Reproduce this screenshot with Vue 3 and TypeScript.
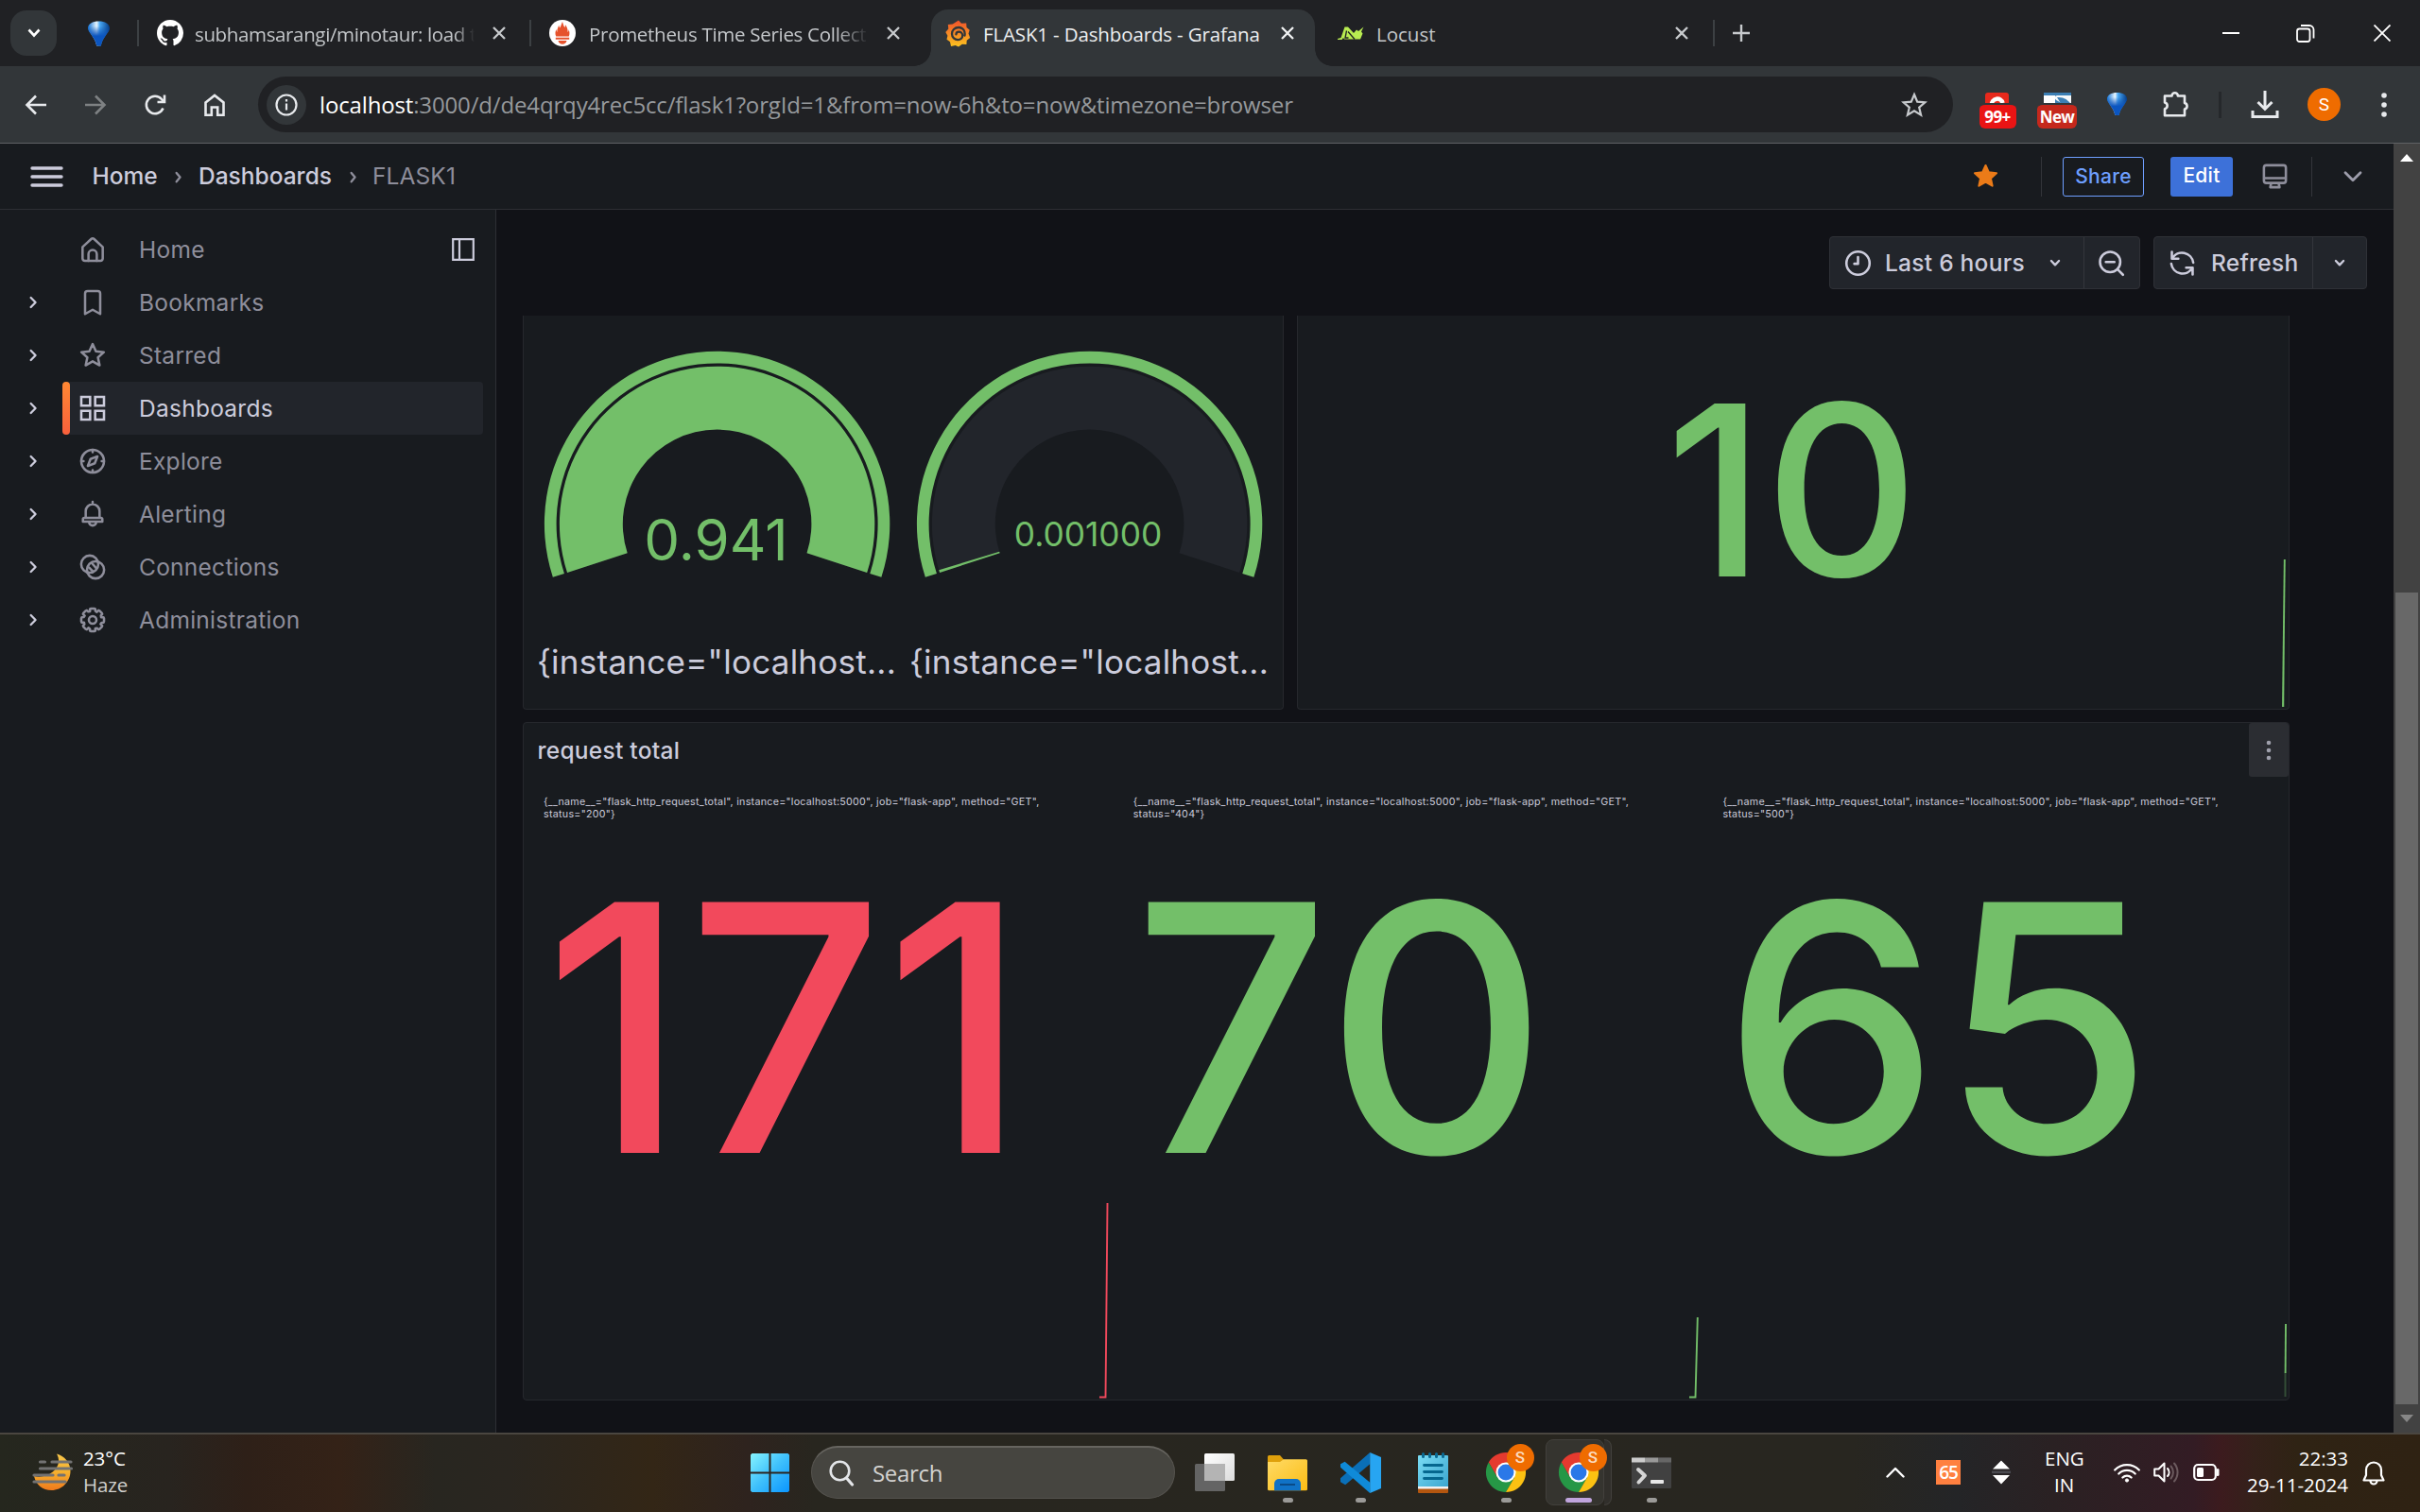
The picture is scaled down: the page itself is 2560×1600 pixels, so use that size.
<script setup lang="ts">
interface NavItem {
  label: string
  paths: string[]
  expandable: boolean
  active?: boolean
}

/** Outline of a cog with eight rounded teeth, centred in a 24-unit box. */
function cogPath(): string {
  const points: string[] = []
  for (let i = 0; i < 8; i++) {
    const base = (i * Math.PI) / 4 - Math.PI / 2
    const steps: [number, number][] = [
      [-0.24, 8.9],
      [-0.13, 9.1],
      [0.13, 9.1],
      [0.24, 8.9],
      [0.3, 7.4],
      [0.485, 7.1],
    ]
    for (const [offset, radius] of steps) {
      const a = base + offset
      points.push(`${(12 + radius * Math.cos(a)).toFixed(2)} ${(12 + radius * Math.sin(a)).toFixed(2)}`)
    }
  }
  return `M${points.join('L')}Z`
}

const starPath =
  'M12 3.1l2.6 5.7 6.3.7-4.7 4.2 1.3 6.2L12 16.8l-5.5 3.1 1.3-6.2-4.7-4.2 6.3-.7z'

const balloonPath = 'M1 8C1 3 6 .5 12.500.5S24 3 24 8C24 12 16 18 14.800 26.500h-4.600C9 18 1 12 1 8z'

const navItems: NavItem[] = [
  {
    label: 'Home',
    expandable: false,
    paths: ['M4 10l7-6.4a1.5 1.5 0 0 1 2 0l7 6.4v9.2a1.8 1.8 0 0 1-1.8 1.8H5.800A1.800 1.800 0 0 1 4 19.200z', 'M8.700 21v-5.300a3.300 3.300 0 0 1 6.600 0V21'],
  },
  { label: 'Bookmarks', expandable: true, paths: ['M6 21.200V5a2 2 0 0 1 2-2h8a2 2 0 0 1 2 2v16.200l-6-3.400z'] },
  { label: 'Starred', expandable: true, paths: [starPath] },
  {
    label: 'Dashboards',
    expandable: true,
    active: true,
    paths: ['M3 3h7v7H3zM14 3h7v7h-7zM3 14h7v7H3zM14 14h7v7h-7z'],
  },
  {
    label: 'Explore',
    expandable: true,
    paths: [
      'M21 12a9 9 0 1 1-18 0 9 9 0 0 1 18 0z',
      'M15.800 8.200l-2.100 5.500-5.500 2.100 2.100-5.500zM12 3v1.800M12 19.200V21M3 12h1.800M19.200 12H21',
    ],
  },
  {
    label: 'Alerting',
    expandable: true,
    paths: ['M12 2.200v2M6.500 15V9.700a5.500 5.500 0 0 1 11 0V15M5.500 15h13a1.200 1.200 0 0 1 1.200 1.200V18H4.300v-1.800A1.200 1.200 0 0 1 5.500 15z', 'M9.200 18.300a2.800 2.800 0 0 0 5.600 0'],
  },
  {
    label: 'Connections',
    expandable: true,
    paths: [
      'M16.500 9.700a6.800 6.800 0 1 1-13.600 0 6.800 6.800 0 0 1 13.600 0z',
      'M21.100 14.300a6.800 6.800 0 1 1-13.600 0 6.800 6.800 0 0 1 13.600 0z',
      'M9.200 12.500l3.200 3.200M11.600 9.200l3.200 3.600',
    ],
  },
  {
    label: 'Administration',
    expandable: true,
    paths: [cogPath(), 'M15 12a3 3 0 1 1-6 0 3 3 0 0 1 6 0z'],
  },
]

const CX = 196.6
const CY = 220.4
const START = -198
const SWEEP = 216

function polar(r: number, deg: number): string {
  const a = (deg * Math.PI) / 180
  return `${(CX + r * Math.cos(a)).toFixed(2)} ${(CY + r * Math.sin(a)).toFixed(2)}`
}

/** Ring segment between two radii, from fraction 0 to `fraction` of the gauge sweep. */
function band(inner: number, outer: number, fraction: number): string {
  const end = START + SWEEP * fraction
  const large = SWEEP * fraction > 180 ? 1 : 0
  return `M${polar(outer, START)}A${outer} ${outer} 0 ${large} 1 ${polar(outer, end)}L${polar(inner, end)}A${inner} ${inner} 0 ${large} 0 ${polar(inner, START)}Z`
}

const gauges = [
  { text: '0.941', size: 60, baseline: 259, fill: 1, x: 195.5 },
  { text: '0.001000', size: 35.3, baseline: 243.5, fill: 0.0045, x: 195 },
]

const stats = [
  { code: '200', value: '171', color: '#f2495c', spark: 'M588 208.500H594.500L596.500 3' },
  { code: '404', value: '70', color: '#73bf69', spark: 'M588 208.500H594.500L596.800 124' },
  { code: '500', value: '65', color: '#73bf69', spark: 'M595.600 183L596 131' },
]
</script>

<template>
  <div class="screen">
    <!-- Tab strip -->
    <div class="tabs">
      <div class="tab-search">
        <svg width="18" height="12" viewBox="0 0 18 12"><path d="M3.500 2.500L9 8.500l5.500-6" stroke="#fff" stroke-width="2.600" fill="none" /></svg>
      </div>
      <svg class="balloon" width="25" height="27" viewBox="0 0 25 27">
        <defs>
          <linearGradient id="bl" x1="0" y1="0" x2="1" y2="0">
            <stop offset="0" stop-color="#1173d8" /><stop offset=".4" stop-color="#eaf7ff" /><stop offset=".55" stop-color="#49a8f5" /><stop offset="1" stop-color="#033b86" />
          </linearGradient>
          <linearGradient id="bv" x1="0" y1="0" x2="0" y2="1">
            <stop offset=".2" stop-color="#0a4fae" stop-opacity="0" /><stop offset=".6" stop-color="#0b55c0" />
          </linearGradient>
        </defs>
        <path :d="balloonPath" fill="url(#bl)" />
        <path :d="balloonPath" fill="url(#bv)" />
      </svg>
      <i class="sep s1"></i>
      <svg class="gh" width="28" height="28" viewBox="0 0 16 16"><path fill="#fff" d="M8 0C3.580 0 0 3.580 0 8c0 3.540 2.290 6.530 5.470 7.590.4.070.55-.17.55-.38 0-.19-.01-.82-.01-1.490-2.010.37-2.530-.49-2.690-.94-.09-.23-.48-.94-.82-1.130-.28-.15-.68-.52-.01-.53.63-.01 1.080.58 1.230.82.72 1.210 1.870.87 2.330.66.070-.52.28-.87.51-1.070-1.780-.2-3.640-.89-3.640-3.950 0-.87.31-1.590.82-2.150-.08-.2-.36-1.020.08-2.120 0 0 .67-.21 2.200.82.64-.18 1.320-.27 2-.27s1.360.09 2 .27c1.530-1.040 2.200-.82 2.200-.82.44 1.100.16 1.920.08 2.120.51.56.82 1.270.82 2.150 0 3.070-1.870 3.750-3.650 3.950.29.25.54.73.54 1.480 0 1.070-.01 1.930-.01 2.200 0 .21.15.46.55.38A8.010 8.010 0 0016 8c0-4.420-3.580-8-8-8z" /></svg>
      <span class="tab-title t1">subhamsarangi/minotaur: load t</span>
      <svg class="x x1" viewBox="0 0 14 14"><path d="M1 1l12 12M13 1L1 13" /></svg>
      <i class="sep s2"></i>
      <svg class="prom" width="28" height="28" viewBox="0 0 28 28">
        <circle cx="14" cy="14" r="14" fill="#fff" />
        <path fill="#e6522c" d="M14 2c1 3 1 4 2.500 6 .6-1 .5-2 .3-3 2 2 3 5 2.800 8 1-1 1-2 1-3 1 2.500 1.200 5 .2 7.500H7.200C6 15 6.400 12 7.500 10c0 1 .2 2 1 3C8 10 9.500 7.500 10.500 5.500c0 1.300 0 2 .7 3C12.500 6.500 13 4 14 2zM6.800 18.800h14.400v2H6.800zM9.500 22h9c-.5 2.500-2.300 3.800-4.500 3.800S10 24.500 9.500 22z" />
      </svg>
      <span class="tab-title t2">Prometheus Time Series Collect</span>
      <svg class="x x2" viewBox="0 0 14 14"><path d="M1 1l12 12M13 1L1 13" /></svg>
      <div class="tab-active">
        <svg class="graf" width="27" height="29" viewBox="0 0 27 29">
          <defs><linearGradient id="gg" x1="0" y1="0" x2="0" y2="1"><stop offset="0" stop-color="#f0512b" /><stop offset="1" stop-color="#fcc41f" /></linearGradient></defs>
          <path fill="url(#gg)" d="M14 .5l3 3.300 5.200-.3.300 4.500 3.200 2.800-1.200 3.700 1.700 4.500-3.500 2.700-.3 4.300-4.600-.3L14 28.500l-3.300-1.600-4.700 1-1-4.600-3.500-2.600.9-4L.3 13l3-3.500-.5-4.500 5-.6z" />
          <path d="M20.500 16.500c.8-5-2-8.500-6.300-8.500-4.400 0-7.200 3.200-7.200 6.800 0 3.800 3 6.400 6.300 6.400 3 0 4.900-2.200 4.900-4.600s-1.700-4-3.800-4c-1.900 0-3 1.300-3 2.800" fill="none" stroke="#323639" stroke-width="2.300" stroke-linecap="round" />
        </svg>
        <span class="tab-title t3">FLASK1 - Dashboards - Grafana</span>
        <svg class="x x3" viewBox="0 0 14 14"><path d="M1 1l12 12M13 1L1 13" /></svg>
      </div>
      <svg class="locust" width="28" height="15" viewBox="0 0 28 15">
        <path fill="#b8ec51" d="M0 13L3.500 12 7.500.5h3.500l6 6.500 3-3.500 2 1.500L27.500.5l-2.500 5 1.500 2-2.500 6H7l-1-1.500-1.500 2H0z" />
        <path d="M9.500 4.500l-1.500 7.500h3.500M11 5.500l7 8" stroke="#202124" stroke-width="1.300" fill="none" />
      </svg>
      <span class="tab-title t4">Locust</span>
      <svg class="x x4" viewBox="0 0 14 14"><path d="M1 1l12 12M13 1L1 13" /></svg>
      <i class="sep s3"></i>
      <svg class="plus" width="18" height="18" viewBox="0 0 18 18"><path d="M9 0v18M0 9h18" stroke="#c7cacd" stroke-width="2.400" /></svg>
      <div class="grow"></div>
      <svg width="18" height="18" viewBox="0 0 18 18"><path d="M0 9h18" stroke="#fff" stroke-width="2" /></svg>
      <svg class="win2" width="20" height="19" viewBox="0 0 20 19" fill="none" stroke="#fff" stroke-width="1.800"><rect x="1" y="4.500" width="13.500" height="13.500" rx="2.500" /><path d="M5 1h9a4.500 4.500 0 0 1 4.500 4.500V14.500" /></svg>
      <svg class="win3" width="18" height="18" viewBox="0 0 18 18"><path d="M.5.5l17 17M17.500.5l-17 17" stroke="#fff" stroke-width="1.800" /></svg>
    </div>

    <!-- Address bar -->
    <div class="toolbar">
      <div class="tb-nav">
        <svg width="28" height="28" viewBox="0 0 28 28"><path d="M25 14H5M14 4.500L4.500 14l9.500 9.500" /></svg>
        <svg width="28" height="28" viewBox="0 0 28 28" class="dim"><path d="M3 14h20M14 4.500l9.500 9.500-9.500 9.500" /></svg>
        <svg width="28" height="28" viewBox="0 0 28 28"><path d="M22.500 17.500A9.200 9.200 0 1 1 21 8l2.500 3M24 3.500V11h-7.500" /></svg>
        <svg width="28" height="28" viewBox="0 0 28 28"><path d="M4.500 11.500L14 4l9.500 7.500v13.200h-6.300v-8.200h-6.400v8.200H4.500z" /></svg>
      </div>
      <div class="omnibox">
        <span class="info">
          <svg width="24" height="24" viewBox="0 0 24 24" fill="none" stroke="#e8eaed" stroke-width="2.200"><circle cx="12" cy="12" r="10.500" /><path d="M12 10.500v7M12 6v2.500" /></svg>
        </span>
        <span class="url"><b>localhost</b>:3000/d/de4qrqy4rec5cc/flask1?orgId=1&amp;from=now-6h&amp;to=now&amp;timezone=browser</span>
        <svg class="fav" width="28" height="28" viewBox="0 0 28 28"><path d="M14 3l3.200 7.600 8.200.7-6.200 5.400 1.900 8L14 20.400l-7.100 4.300 1.900-8-6.200-5.400 8.200-.7z" fill="none" stroke="#c7cacd" stroke-width="2.200" /></svg>
      </div>
      <div class="exts">
        <div class="ext">
          <svg width="26" height="26" viewBox="0 0 26 26"><rect x="0" y="0" width="25" height="26" rx="3" fill="#e8291c" /><path d="M6.500 14C6.500 5 17 4.500 18.500 11" fill="none" stroke="#fff" stroke-width="4.500" /></svg>
          <span class="badge b1">99+</span>
        </div>
        <div class="ext">
          <svg width="29" height="26" viewBox="0 0 29 26"><rect width="29" height="26" fill="#f5f8fa" /><path d="M0 0h29v3H14c-4 1-3 4 1 6l8 4H0z" fill="#3c7fb4" /><path d="M0 3l12 0v10H0z" fill="#fff" /><path d="M14 5q10-1 15 8H19z" fill="#3c7fb4" /></svg>
          <span class="badge b2">New</span>
        </div>
        <div class="ext">
          <svg class="ball2" width="23" height="26" viewBox="0 0 25 27"><path :d="balloonPath" fill="url(#bl)" /><path :d="balloonPath" fill="url(#bv)" /></svg>
        </div>
        <div class="ext">
          <svg class="puzzle" width="30" height="30" viewBox="0 0 30 30"><path d="M3 6.500h7.500a3.200 3.200 0 0 1 6.400 0H24V14a3.400 3.400 0 0 1 0 6.600v6.600H3v-7a3.500 3.500 0 0 0 0-6.800z" fill="none" stroke="#e8eaed" stroke-width="2.600" stroke-linejoin="round" /></svg>
        </div>
        <i class="ext-sep"></i>
        <div class="ext">
          <svg width="30" height="30" viewBox="0 0 30 30" fill="none" stroke="#e8eaed" stroke-width="3"><path d="M15 0v19M7.500 12l7.500 7.500 7.500-7.500" /><path d="M2 21v6.500h26V21" /></svg>
        </div>
        <div class="ext"><span class="avatar">S</span></div>
        <div class="ext">
          <svg width="8" height="28" viewBox="0 0 8 28" fill="#e8eaed"><circle cx="4" cy="4" r="2.800" /><circle cx="4" cy="14" r="2.800" /><circle cx="4" cy="24" r="2.800" /></svg>
        </div>
      </div>
    </div>

    <!-- Page -->
    <div class="page">
      <div class="app">
        <header class="topbar">
          <svg class="burger" width="35" height="22" viewBox="0 0 35 22"><path d="M2 2h31M2 11h31M2 20h31" stroke="#ccccdc" stroke-width="3.400" stroke-linecap="round" /></svg>
          <span class="crumb c1">Home</span>
          <svg class="cr" width="28" height="28" viewBox="0 0 24 24"><path d="M10 8.500l3.300 4-3.300 4" /></svg>
          <span class="crumb c2">Dashboards</span>
          <svg class="cr" width="28" height="28" viewBox="0 0 24 24"><path d="M10 8.500l3.300 4-3.300 4" /></svg>
          <span class="crumb c3">FLASK1</span>
          <div class="grow"></div>
          <svg class="ostar" width="31" height="31" viewBox="0 0 24 24"><path :d="starPath" fill="#eb7b18" stroke="#eb7b18" stroke-width="1.600" stroke-linejoin="round" /></svg>
          <i class="vsep v1"></i>
          <span class="btn share">Share</span>
          <span class="btn edit">Edit</span>
          <svg class="monitor" width="31" height="31" viewBox="0 0 24 24" fill="none" stroke="#8e8e9b" stroke-width="2" stroke-linejoin="round"><rect x="3" y="3" width="18" height="14.500" rx="2" /><path d="M3 13.500h18M9 17.500l-.8 3.500h7.600l-.8-3.500" /></svg>
          <i class="vsep v2"></i>
          <svg class="topchev" width="28" height="28" viewBox="0 0 28 28"><path d="M6 9.800l8 8 8-8" fill="none" stroke="#9d9dab" stroke-width="2.800" stroke-linecap="round" stroke-linejoin="round" /></svg>
        </header>

        <div class="body">
          <nav class="side">
            <div v-for="item in navItems" :key="item.label" class="nav-row">
              <svg class="nav-chev" width="28" height="28" viewBox="0 0 24 24">
                <path v-if="item.expandable" d="M10 7.700l4.200 4.300-4.200 4.300" />
              </svg>
              <div class="nav-item" :class="{ on: item.active }">
                <svg class="nav-icon" width="32" height="32" viewBox="0 0 24 24">
                  <path v-for="d in item.paths" :key="d" :d="d" />
                </svg>
                <span>{{ item.label }}</span>
                <svg v-if="!item.expandable" class="dock" width="24" height="24" viewBox="0 0 24 24"><path d="M1.200 1.200h21.600v21.600H1.200zM8 1.200v21.600" fill="none" stroke="#ccccdc" stroke-width="2.200" /></svg>
              </div>
            </div>
          </nav>

          <main class="main">
            <div class="controls">
              <div class="group">
                <span class="cell range">
                  <svg width="31" height="31" viewBox="0 0 24 24"><circle cx="12" cy="12" r="9.500" /><path d="M12 7v5.500H9" /></svg>
                  <span class="last">Last 6 hours</span>
                  <svg class="small-chev" width="28" height="28" viewBox="0 0 24 24"><path d="M8.500 10.300l3.500 3.700 3.500-3.700" /></svg>
                </span>
                <span class="cell zoom">
                  <svg width="31" height="31" viewBox="0 0 24 24"><circle cx="11" cy="11" r="8.300" /><path d="M7.500 11h7M17 17l4.500 4.500" /></svg>
                </span>
              </div>
              <div class="group">
                <span class="cell refresh">
                  <svg width="31" height="31" viewBox="0 0 24 24"><path d="M3.500 2.800v5.500h5.300M3.800 8A9.300 9.300 0 0 1 21 11.500M20.500 21.200v-5.500h-5.300M20.200 16A9.300 9.300 0 0 1 3 12.500" /></svg>
                  <span class="rf">Refresh</span>
                </span>
                <span class="cell interval">
                  <svg class="small-chev" width="28" height="28" viewBox="0 0 24 24"><path d="M8.500 10.300l3.500 3.700 3.500-3.700" /></svg>
                </span>
              </div>
            </div>

            <div class="panels">
              <section class="panel cut gauges">
                <div v-for="g in gauges" :key="g.text" class="gauge">
                  <svg width="394" height="346" viewBox="0 0 394 346">
                    <path :d="band(170, 182.700, 1)" fill="#73bf69" />
                    <path :d="band(99.800, 166.700, 1)" fill="#22252b" />
                    <path :d="band(99.800, 166.700, g.fill)" fill="#73bf69" />
                    <text :x="g.x" :y="g.baseline" :font-size="g.size" text-anchor="middle" fill="#73bf69">{{ g.text }}</text>
                  </svg>
                  <div class="gauge-title">{instance="localhost...</div>
                </div>
              </section>

              <section class="panel cut single">
                <div class="ten">10</div>
                <svg class="ten-spark" width="8" height="160" viewBox="0 0 8 160"><path d="M4.500 2l-1.800 156h2.300z" fill="#73bf69" fill-opacity=".25" /><path d="M4.800 2l-1.800 156" stroke="#73bf69" stroke-width="1.900" fill="none" /></svg>
              </section>

              <section class="panel totals">
                <div class="panel-head">
                  <span>request total</span>
                  <div class="menu">
                    <svg width="6" height="22" viewBox="0 0 6 22" fill="#9fa0ac"><circle cx="3" cy="3" r="2.300" /><circle cx="3" cy="11" r="2.300" /><circle cx="3" cy="19" r="2.300" /></svg>
                  </div>
                </div>
                <div class="stat-row">
                  <div v-for="s in stats" :key="s.code" class="stat">
                    <div class="stat-label">{__name__="flask_http_request_total", instance="localhost:5000", job="flask-app", method="GET",<br />status="{{ s.code }}"}</div>
                    <div class="stat-value" :style="{ color: s.color }">{{ s.value }}</div>
                    <svg class="spark" width="598" height="210" viewBox="0 0 598 210">
                      <path v-if="s.code === '500'" d="M595.500 183v25" :stroke="s.color" stroke-opacity=".3" stroke-width="2" />
                      <path :d="s.spark" :stroke="s.color" stroke-width="1.900" fill="none" />
                    </svg>
                  </div>
                </div>
              </section>
            </div>
          </main>
        </div>
      </div>

      <div class="scrollbar">
        <div class="arrow"><svg width="14" height="8" viewBox="0 0 14 8"><path d="M0 8l7-8 7 8z" fill="#fff" /></svg></div>
        <div class="thumb"></div>
        <div class="arrow"><svg width="14" height="8" viewBox="0 0 14 8"><path d="M0 0l7 8 7-8z" fill="#868686" /></svg></div>
      </div>
    </div>

    <!-- Taskbar -->
    <div class="taskbar">
      <svg class="weather" width="44" height="40" viewBox="0 0 44 40">
        <defs><linearGradient id="mg" x1="0" y1="0" x2="0" y2="1"><stop offset="0" stop-color="#f7c64a" /><stop offset=".5" stop-color="#f5b02e" /><stop offset="1" stop-color="#f07a1c" /></linearGradient></defs>
        <path d="M26 .5C34 2.500 40.500 9.500 40.500 18.500 40.500 30 31.500 39 20.500 39 11 39 4 33 2 24c12 3 25-5 26-15 .2-3-.5-6-2-8.500z" fill="url(#mg)" />
        <path d="M8.500 9h5M21 9h20M8.500 16h33M2 23h20M28 23h6M2 30h33" stroke="#727272" stroke-width="3.200" stroke-linecap="round" />
      </svg>
      <div class="temp"><span class="hi">23°C</span><span>Haze</span></div>
      <svg class="start" width="41" height="41" viewBox="0 0 41 41">
        <defs><linearGradient id="wg" gradientUnits="userSpaceOnUse" x1="0" y1="0" x2="41" y2="41"><stop offset="0" stop-color="#86f4ff" /><stop offset=".5" stop-color="#3fc0fb" /><stop offset="1" stop-color="#0a95ff" /></linearGradient></defs>
        <path d="M1.500 0H19.500V19.500H0V1.500zM21.500 0H39.500L41 1.500V19.500H21.500zM0 21.500H19.500V41H1.500L0 39.500zM21.500 21.500H41V39.500L39.500 41H21.500z" fill="url(#wg)" />
      </svg>
      <div class="search">
        <svg width="27" height="28" viewBox="0 0 27 28" fill="none" stroke="#e3e5e8" stroke-width="2.600" stroke-linecap="round"><circle cx="11.500" cy="11.500" r="9.800" /><path d="M18.500 19l6 7" stroke-width="3.200" /></svg>
        <span>Search</span>
      </div>
      <div class="apps">
        <div class="appcell">
          <svg width="42" height="42" viewBox="0 0 42 42"><defs><linearGradient id="tv" x1="0" y1="0" x2="1" y2="1"><stop offset="0" stop-color="#fff" /><stop offset="1" stop-color="#dcdcdc" /></linearGradient></defs><rect x="10" y="1" width="32" height="29" rx="1.500" fill="url(#tv)" /><rect x="0" y="12" width="32" height="29" rx="1.500" fill="#646464" /><rect x="10" y="12" width="22" height="18" fill="#b4b4b4" /></svg>
        </div>
        <div class="appcell">
          <svg width="42" height="42" viewBox="0 0 42 42"><defs><linearGradient id="fo" x1="0" y1="0" x2="1" y2="1"><stop offset="0" stop-color="#ffdb66" /><stop offset="1" stop-color="#fbbc14" /></linearGradient></defs><path d="M0 4.500A1.500 1.500 0 0 1 1.500 3H13l4 4.500V12H0z" fill="#dfa00b" /><path d="M0 10h13l4-2.800h23.500A1.500 1.500 0 0 1 42 8.700v30a1.500 1.500 0 0 1-1.500 1.500h-39A1.500 1.500 0 0 1 0 38.700z" fill="url(#fo)" /><path d="M7 40.200V33a5 5 0 0 1 5-5h18a5 5 0 0 1 5 5v7.200z" fill="#1072c6" /><path d="M13 34h16" stroke="#0a4a86" stroke-width="2" /></svg>
          <i class="dot"></i>
        </div>
        <div class="appcell">
          <svg width="43" height="43" viewBox="0 0 42 42"><path d="M30.500 0v12L5 33.500 0 30.500v-4z" fill="#0a6fb8" /><path d="M30.500 42V31L4.500 9.500 0 12v3.500z" fill="#0f8ad8" /><path d="M30.500 0L42 5v32l-11.500 5z" fill="#27a5f2" /></svg>
          <i class="dot"></i>
        </div>
        <div class="appcell">
          <svg width="32" height="43" viewBox="0 0 32 43"><defs><linearGradient id="np" x1="0" y1="0" x2="1" y2="1"><stop offset="0" stop-color="#7adcf4" /><stop offset="1" stop-color="#3ba6d0" /></linearGradient></defs><rect y="38" width="32" height="5" rx="1" fill="#b4560f" /><rect y="33" width="32" height="5.500" fill="#f1f1f1" /><path d="M0 4a1 1 0 0 1 1-1h30a1 1 0 0 1 1 1v32H0z" fill="url(#np)" /><path d="M5.500 1.500v3M12.500 1.500v3M19.500 1.500v3M26.500 1.500v3" stroke="#0a6a92" stroke-width="3" stroke-linecap="round" /><path d="M6.500 13.500h19M6.500 20.500h19M6.500 27.500h19" stroke="#05678f" stroke-width="2.800" stroke-linecap="round" /></svg>
        </div>
        <div v-for="n in 2" :key="n" class="appcell" :class="{ current: n === 2 }">
          <svg width="46" height="46" viewBox="0 0 48 48"><path d="M4.950 13A22 22 0 0 1 43.050 13H24L14.470 29.500z" fill="#e53a2f" /><path d="M4.950 13A22 22 0 0 0 24 46l9.530-16.500H14.470z" fill="#269746" /><path d="M43.050 13A22 22 0 0 1 24 46l9.530-16.500L24 13z" fill="#fcc112" /><circle cx="24" cy="24" r="11" fill="#fff" /><circle cx="24" cy="24" r="8.800" fill="#2a78e8" /></svg>
          <span class="who">S</span>
          <i class="dot" :class="{ wide: n === 2 }"></i>
        </div>
        <div class="appcell">
          <svg width="42" height="42" viewBox="0 0 42 42"><path d="M0 7a1.500 1.500 0 0 1 1.500-1.500h39A1.500 1.500 0 0 1 42 7v30a1 1 0 0 1-1 1H1a1 1 0 0 1-1-1z" fill="#414141" /><path d="M0 5.500h14V10.500H0z" fill="#ccc" /><path d="M14 5.500h14V10.500H14z" fill="#999" /><path d="M28 5.500h14V10.500H28z" fill="#666" /><path d="M7 18l7 6.500L7.500 31.500" fill="none" stroke="#d5d5d5" stroke-width="4" stroke-linecap="round" stroke-linejoin="round" /><rect x="20" y="29" width="14" height="4" rx="1" fill="#e8e8e8" /></svg>
          <i class="dot"></i>
        </div>
      </div>
      <div class="grow"></div>
      <svg class="up" width="20" height="12" viewBox="0 0 20 12"><path d="M1.500 10.500L10 2l8.500 8.500" fill="none" stroke="#fff" stroke-width="2.400" stroke-linecap="round" stroke-linejoin="round" /></svg>
      <span class="t65">65</span>
      <svg class="updown" width="20" height="26" viewBox="0 0 20 26"><path d="M1 9.500L10 .5l9 9zM1 16l9 9.500 9-9.500z" fill="#fff" /><path d="M0 12.800h20" stroke="#4a4a50" stroke-width="2.500" /></svg>
      <div class="lang"><span>ENG</span><span>IN</span></div>
      <svg class="wifi" width="28" height="22" viewBox="0 0 28 22" fill="none" stroke="#fff" stroke-width="2.200" stroke-linecap="round"><path d="M1.200 8.500a18 18 0 0 1 25.600 0M5.300 12.500a12.300 12.300 0 0 1 17.400 0M9.400 16.500a6.500 6.500 0 0 1 9.200 0" /><circle cx="14" cy="19.500" r="1.600" fill="#fff" stroke-width="1" /></svg>
      <svg class="spk" width="28" height="24" viewBox="0 0 28 24" fill="none" stroke="#fff" stroke-width="2" stroke-linecap="round" stroke-linejoin="round"><path d="M1.200 8.500h4.300l6-6v19l-6-6H1.200z" /><path d="M15 8a6 6 0 0 1 0 8" /><path d="M18.500 5.500a10 10 0 0 1 0 13M22 2.500a14.500 14.500 0 0 1 0 19" stroke="#6b5a5e" /></svg>
      <svg class="bat" width="28" height="20" viewBox="0 0 28 20"><rect x="1.200" y="2" width="22.600" height="16" rx="4" fill="none" stroke="#fff" stroke-width="2.200" /><rect x="4" y="5" width="7" height="10" rx="1.500" fill="#fff" /><path d="M26 7.500v5" stroke="#fff" stroke-width="3" stroke-linecap="round" /></svg>
      <div class="clock"><span>22:33</span><span>29-11-2024</span></div>
      <svg class="bell" width="24" height="27" viewBox="0 0 24 27" fill="none" stroke="#fff" stroke-width="2.200" stroke-linejoin="round"><path d="M4 10.500a8 8 0 0 1 16 0V16l2.500 5.500h-21L4 16z" /><path d="M8.500 22a3.500 3.500 0 0 0 7 0" /></svg>
    </div>
  </div>
</template>

<style>
body {
  margin: 0;
  background: #111217;
}
</style>

<style scoped>
.screen {
  width: 2560px;
  height: 1600px;
  overflow: hidden;
  display: flex;
  flex-direction: column;
  background: #111217;
  font-family: 'Open Sans', 'Noto Sans', sans-serif;
}
.screen svg {
  display: block;
  flex: none;
}
.grow {
  flex: 1;
}

/* Tab strip */
.tabs {
  height: 70px;
  flex: none;
  display: flex;
  align-items: center;
  background: #202124;
  padding-left: 11px;
  padding-right: 31px;
}
.tab-search {
  width: 49px;
  height: 48px;
  border-radius: 17px;
  background: #323639;
  display: flex;
  align-items: center;
  justify-content: center;
}
.balloon { margin-left: 32px; }
.sep {
  width: 2px;
  height: 28px;
  flex: none;
  background: #3c4043;
}
.s1 { margin-left: 28px; }
.gh { margin-left: 19px; }
.s2 { margin-left: 25px; }
.prom { margin-left: 19px; }
.s3 { margin-left: 26px; }
.plus { margin-left: 19px; }
.tab-title {
  flex: none;
  font-size: 20.5px;
  line-height: 28px;
  padding-top: 2px;
  color: #c3c6c9;
  white-space: nowrap;
}
.t1 {
  margin-left: 12px;
  width: 298px;
  letter-spacing: -0.36px;
  -webkit-mask-image: linear-gradient(90deg, #000 275px, transparent 296px);
  mask-image: linear-gradient(90deg, #000 275px, transparent 296px);
}
.t2 {
  margin-left: 14px;
  width: 296px;
  letter-spacing: -0.29px;
  -webkit-mask-image: linear-gradient(90deg, #000 262px, transparent 296px);
  mask-image: linear-gradient(90deg, #000 262px, transparent 296px);
}
.t3 {
  margin-left: 13px;
  width: 297px;
  color: #eceef0;
  letter-spacing: -0.14px;
}
.t4 {
  margin-left: 13px;
  width: 289px;
}
.x {
  width: 14px;
  height: 14px;
  fill: none;
  stroke: #c7cacd;
  stroke-width: 2.3;
}
.x1 { margin-left: 17px; }
.x2 { margin-left: 19px; }
.x3 { margin-left: 18px; stroke: #f1f3f4; }
.x4 { margin-left: 27px; }
.tab-active {
  position: relative;
  align-self: flex-end;
  margin-left: 33px;
  width: 406px;
  height: 60px;
  flex: none;
  box-sizing: border-box;
  padding-left: 15px;
  padding-bottom: 10px;
  display: flex;
  align-items: center;
  border-radius: 18px 18px 0 0;
  background: #323639;
}
.tab-active::before,
.tab-active::after {
  content: '';
  position: absolute;
  bottom: 0;
  width: 18px;
  height: 18px;
}
.tab-active::before {
  left: -18px;
  background: radial-gradient(circle at 0 0, transparent 17.5px, #323639 18px);
}
.tab-active::after {
  right: -18px;
  background: radial-gradient(circle at 100% 0, transparent 17.5px, #323639 18px);
}
.locust { margin-left: 24px; }
.win2 { margin-left: 60px; }
.win3 { margin-left: 62px; }

/* Address bar */
.toolbar {
  height: 82px;
  flex: none;
  box-sizing: border-box;
  display: flex;
  align-items: center;
  background: #323639;
  border-bottom: 1px solid #5f6164;
}
.tb-nav {
  display: flex;
  gap: 35px;
  margin-left: 24px;
  fill: none;
  stroke: #e8eaed;
  stroke-width: 2.6;
}
.tb-nav .dim { stroke: #7e8183; }
.omnibox {
  margin-left: 32px;
  width: 1793px;
  height: 59px;
  flex: none;
  box-sizing: border-box;
  padding: 0 27px 0 9px;
  border-radius: 30px;
  background: #202124;
  display: flex;
  align-items: center;
}
.info {
  width: 42px;
  height: 42px;
  border-radius: 50%;
  background: #323639;
  display: flex;
  align-items: center;
  justify-content: center;
}
.url {
  flex: 1;
  margin-left: 14px;
  font-size: 24px;
  line-height: 34px;
  letter-spacing: -0.15px;
  color: #96999c;
  white-space: nowrap;
}
.url b {
  font-weight: 400;
  color: #fff;
}
.exts {
  margin-left: 15.5px;
  display: flex;
  align-items: center;
}
.ext {
  position: relative;
  width: 63px;
  height: 80px;
  flex: none;
  display: flex;
  align-items: center;
  justify-content: center;
}
.badge {
  position: absolute;
  top: 38px;
  height: 27px;
  border-radius: 6px;
  border-top: 2px solid #323639;
  box-sizing: border-box;
  font-size: 17px;
  line-height: 25px;
  font-weight: 700;
  letter-spacing: -0.6px;
  color: #fff;
  text-align: center;
}
.b1 { left: 12px; width: 39px; background: #ea1414; }
.b2 { left: 10.5px; width: 42px; background: #c5281c; }
.ball2,
.puzzle { margin-bottom: 2px; }
.ext-sep {
  width: 3px;
  height: 28px;
  margin: 0 14.5px 0 13px;
  background: #25282b;
}
.avatar {
  width: 35px;
  height: 35px;
  border-radius: 50%;
  background: #ef6c00;
  color: #fff;
  font: 19px/35px Roboto, sans-serif;
  text-align: center;
}

/* Page */
.page {
  height: 1364px;
  flex: none;
  display: flex;
}
.app {
  width: 2532px;
  display: flex;
  flex-direction: column;
  font-family: Inter, sans-serif;
  letter-spacing: 0.26px;
  color: #ccccdc;
}
.topbar {
  height: 70px;
  flex: none;
  box-sizing: border-box;
  display: flex;
  align-items: center;
  padding: 0 29px 0 32px;
  background: #181b1f;
  border-bottom: 1px solid #2d2f34;
}
.crumb {
  font-size: 24.5px;
  line-height: 34px;
  padding-bottom: 1px;
  font-weight: 500;
  letter-spacing: 0;
}
.c1 { margin-left: 30.5px; width: 77.5px; }
.c2 { width: 150px; }
.c3 { color: #8e8e9b; font-weight: 400; letter-spacing: 0.1px; }
.cr {
  fill: none;
  stroke: #8e8e9b;
  stroke-width: 2;
  stroke-linecap: round;
  stroke-linejoin: round;
}
.c1 + .cr { margin-right: 7px; }
.c2 + .cr { margin-right: 6px; }
.ostar { margin-right: 43px; }
.vsep {
  width: 1px;
  height: 42px;
  flex: none;
  background: #33353a;
}
.v1 { margin-right: 22px; }
.v2 { margin-right: 29px; }
.btn {
  height: 42px;
  box-sizing: border-box;
  border-radius: 3px;
  font-size: 21px;
  line-height: 39px;
  font-weight: 500;
  text-align: center;
  flex: none;
}
.share {
  width: 86px;
  border: 1.5px solid #6e9fff;
  color: #6e9fff;
  margin-right: 28px;
}
.edit {
  width: 66px;
  background: #3d71d9;
  color: #fff;
  margin-right: 29px;
}
.monitor { margin-right: 23px; }

.body {
  flex: 1;
  display: flex;
  min-height: 0;
}
.side {
  width: 525px;
  flex: none;
  box-sizing: border-box;
  padding-top: 14px;
  background: #181b1f;
  border-right: 1px solid #2d2f34;
}
.nav-row {
  height: 56px;
  display: flex;
  align-items: center;
  padding-left: 21px;
}
.nav-chev {
  fill: none;
  stroke: #ccccdc;
  stroke-width: 2;
  stroke-linecap: round;
  stroke-linejoin: round;
}
.nav-item {
  position: relative;
  margin-left: 17px;
  width: 445px;
  height: 56px;
  box-sizing: border-box;
  padding: 0 9px 0 16px;
  display: flex;
  align-items: center;
  border-radius: 4px;
  font-size: 24.5px;
  color: #8e8e9b;
}
.nav-item span {
  margin-left: 33px;
  flex: 1;
  padding-bottom: 1px;
}
.nav-item.on {
  background: #22252b;
  color: #ccccdc;
}
.nav-item.on::before {
  content: '';
  position: absolute;
  left: 0;
  top: 0;
  width: 8px;
  height: 56px;
  border-radius: 4px;
  background: linear-gradient(180deg, #ff8833, #f9603c);
}
.nav-icon {
  fill: none;
  stroke: currentColor;
  stroke-width: 1.9;
  stroke-linecap: round;
  stroke-linejoin: round;
}
.on .nav-icon { stroke-linejoin: miter; }

.main {
  flex: 1;
  padding: 28px 28px 0 28px;
}
.controls {
  display: flex;
  justify-content: flex-end;
  gap: 14px;
  height: 56px;
  fill: none;
  stroke: #ccccdc;
  stroke-width: 2;
  stroke-linecap: round;
  stroke-linejoin: round;
}
.group {
  display: flex;
  box-sizing: border-box;
  border: 1px solid #2f3137;
  border-radius: 4px;
  background: #22252b;
}
.group .cell {
  display: flex;
  align-items: center;
  box-sizing: border-box;
  font-size: 24.5px;
  font-weight: 500;
}
.cell + .cell { border-left: 1px solid #34363c; }
.range { width: 268px; padding-left: 14px; }
.last { margin-left: 13px; width: 166px; }
.zoom { width: 59px; padding-left: 13px; }
.refresh { width: 167px; padding-left: 14px; }
.rf { margin-left: 15px; }
.interval { width: 57px; justify-content: center; }

.panels {
  margin-top: 28px;
  display: grid;
  grid-template-columns: 805px 1050px;
  grid-template-rows: 417px 718px;
  gap: 13px 14px;
}
.panel {
  box-sizing: border-box;
  background: #181b1f;
  border: 1.5px solid #26282d;
  border-radius: 4px;
}
.cut {
  border-top: 0;
  border-radius: 0 0 4px 4px;
}
.gauges {
  display: flex;
  justify-content: center;
}
.gauge {
  width: 394px;
  text-align: center;
}
.gauge text {
  font-family: Inter, sans-serif;
  letter-spacing: 0;
}
.gauge-title {
  margin-top: -1.5px;
  padding-right: 1px;
  font-size: 35px;
  line-height: 42px;
  white-space: nowrap;
}
.single {
  position: relative;
  text-align: center;
}
.ten {
  margin-top: 58.5px;
  padding-right: 2px;
  font-size: 252px;
  line-height: 1;
  font-weight: 500;
  color: #73bf69;
}
.ten-spark {
  position: absolute;
  right: 1px;
  bottom: 0;
}
.totals { grid-column: 1 / 3; }
.panel-head {
  height: 57px;
  display: flex;
  align-items: center;
  justify-content: space-between;
  padding-left: 14.5px;
  font-size: 24.5px;
  font-weight: 500;
}
.menu {
  width: 42px;
  height: 57px;
  display: flex;
  align-items: center;
  justify-content: center;
  background: #2b2d32;
  border-radius: 3px;
}
.stat-row {
  display: grid;
  grid-template-columns: 623.7px 623.7px 1fr;
  margin-left: 21px;
  margin-top: 20px;
}
.stat-label {
  font-size: 10.72px;
  line-height: 13.1px;
  white-space: nowrap;
}
.stat-value {
  margin-top: 37px;
  font-size: 365px;
  line-height: 1;
  font-weight: 500;
}

.scrollbar {
  width: 28px;
  flex: none;
  display: flex;
  flex-direction: column;
  background: #424242;
}
.arrow {
  height: 30px;
  display: flex;
  align-items: center;
  justify-content: center;
}
.thumb {
  margin: 445px 2px 0;
  height: 861px;
  background: #686868;
}

/* Taskbar */
.taskbar {
  height: 84px;
  flex: none;
  box-sizing: border-box;
  border-top: 2px solid #4a4640;
  display: flex;
  align-items: center;
  padding: 0 37px 2px 34px;
  color: #fff;
  font-size: 20.5px;
  background: linear-gradient(90deg, #25271e 0, #28241f 180px, #2e2018 260px, #342217 360px, #282620 460px, #2a2620 540px, #332616 690px, #2e231e 790px, #28261f 860px, #282620 1960px, #242527 2070px, #2a2123 2170px, #331c24 2320px, #3c1b1e 2350px, #34211a 2385px, #2f2314 2430px, #2f2213 2560px);
}
.temp,
.lang,
.clock {
  display: flex;
  flex-direction: column;
  line-height: 28px;
  padding-bottom: 2px;
}
.temp {
  margin-left: 10px;
  width: 80px;
  color: #d0cfcd;
  letter-spacing: -0.1px;
}
.temp .hi { color: #fff; }
.start { margin-left: 626px; }
.search {
  margin-left: 23px;
  width: 385px;
  height: 56px;
  flex: none;
  box-sizing: border-box;
  border: 1.5px solid #55534e;
  border-top: 2px solid #66645f;
  border-radius: 28px;
  background: #464540;
  display: flex;
  align-items: center;
  padding-left: 18px;
  font-size: 24px;
  letter-spacing: -0.3px;
  color: #d4d3d1;
}
.search span { margin-left: 19px; padding-bottom: 1px; }
.apps {
  display: flex;
  margin-left: 3.5px;
}
.appcell {
  position: relative;
  width: 77px;
  height: 82px;
  flex: none;
  display: flex;
  align-items: center;
  justify-content: center;
}
.appcell > svg { position: relative; }
.dot {
  position: absolute;
  left: 33px;
  bottom: 9px;
  width: 11px;
  height: 5px;
  border-radius: 3px;
  background: #9b9a98;
}
.dot.wide {
  left: 24.5px;
  width: 28px;
  background: #c0a4dd;
}
.current::before,
.current::after {
  content: '';
  position: absolute;
  top: 6px;
  box-sizing: border-box;
  height: 70px;
  border: 1.5px solid #42403c;
}
.current::before {
  left: 3.5px;
  width: 62px;
  border-radius: 8px;
  background: #35342f;
}
.current::after {
  left: 60px;
  width: 13.5px;
  border-left: 0;
  border-radius: 0 8px 8px 0;
  background: #312f2b;
  z-index: 0;
  clip-path: inset(0 0 0 5.5px);
}
.who {
  position: absolute;
  left: 39px;
  top: 11px;
  width: 29px;
  height: 29px;
  border-radius: 50%;
  background: #ef6c00;
  color: #fbdcc0;
  font: 500 17px/29px Roboto, sans-serif;
  text-align: center;
  z-index: 1;
}
.t65 {
  margin-left: 33px;
  width: 26px;
  height: 26px;
  background: #ff8040;
  text-align: center;
  line-height: 26px;
  letter-spacing: -1px;
  font-size: 19px;
  font-weight: 600;
}
.updown { margin-left: 33px; }
.lang {
  margin-left: 36px;
  width: 41px;
  text-align: center;
}
.wifi { margin-left: 32px; }
.spk { margin-left: 14px; }
.bat { margin-left: 14px; }
.clock {
  margin-left: 16px;
  width: 120px;
  text-align: right;
}
.bell { margin-left: 15px; }
</style>
